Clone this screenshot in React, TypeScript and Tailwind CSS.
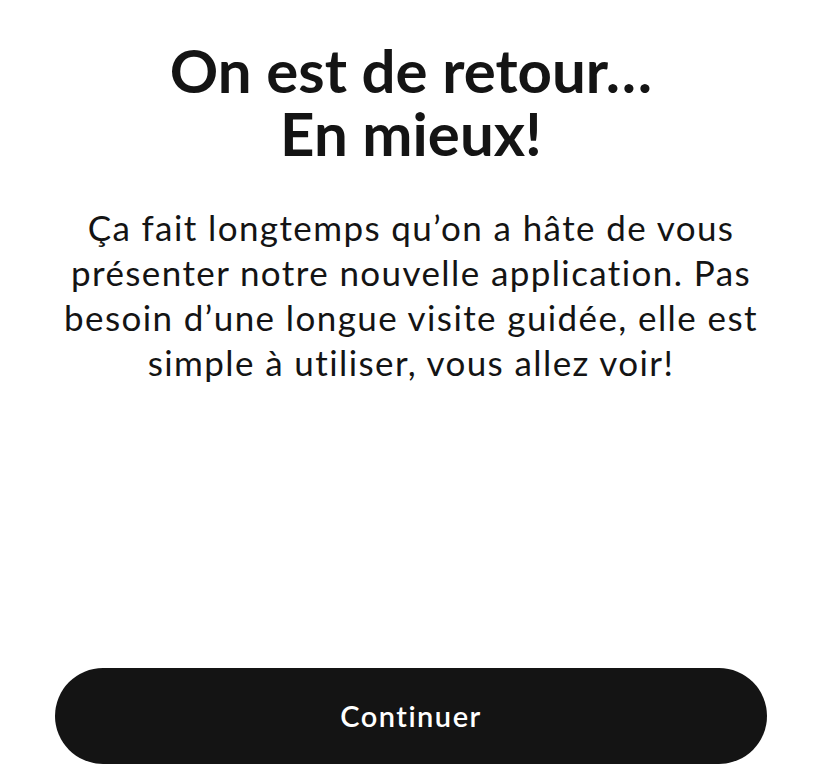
export default function App() {
  return (
    <div
      className="flex h-[780px] w-[822px] flex-col items-center bg-white text-[#141414] [font-variant-ligatures:none]"
      style={{ fontFamily: "Lato, 'Noto Sans', sans-serif" }}
    >
      <h1 className="mt-[39px] text-center text-[60px] font-bold leading-[63px]">
        On est de retour…
        <br />
        En mieux!
      </h1>
      <p className="mt-[40px] text-center text-[35px] leading-[45px] tracking-[1.4px] whitespace-nowrap">
        Ça fait longtemps qu’on a hâte de vous
        <br />
        présenter notre nouvelle application. Pas
        <br />
        besoin d’une longue visite guidée, elle est
        <br />
        simple à utiliser, vous allez voir!
      </p>
      <div className="flex-1" />
      <button className="mb-[16px] flex h-[96px] w-[712px] items-center justify-center rounded-full bg-[#141414] text-[29px] font-semibold tracking-[1.5px] text-white">
        Continuer
      </button>
    </div>
  );
}
